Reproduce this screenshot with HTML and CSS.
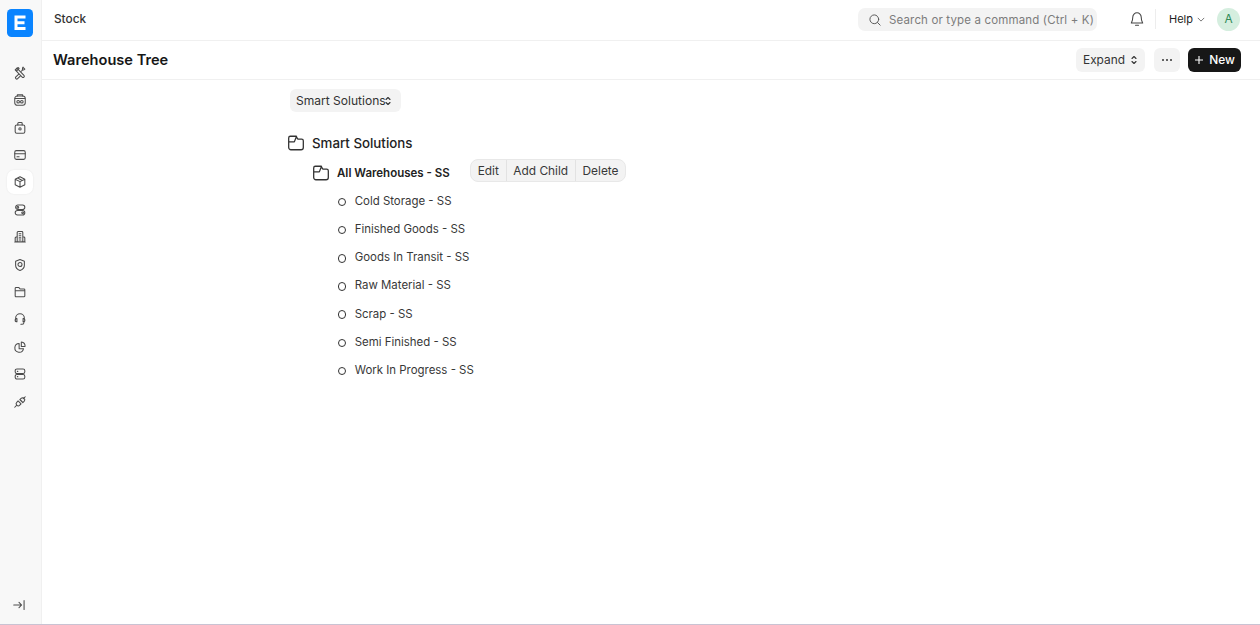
FILE: index.html
```html
<!DOCTYPE html>
<html lang="en">
<head>
<meta charset="utf-8">
<title>Warehouse Tree</title>
<link rel="stylesheet" href="styles.css">
</head>
<body>
<div class="app">
  <aside class="sidebar">
    <div class="logo"><svg width="26" height="28" viewBox="0 0 26 28"><rect width="26" height="28" rx="4.500" fill="#0a84ff"/><path d="M7.500 6.500h11v3h-8v2.700h7v3h-7v2.800h8v3h-11z" fill="#fff"/></svg></div>
    <nav class="nav">
      <a class="nav-item"><svg class="ni" viewBox="0 0 16 16"><path d="M2.500 4.500l2-2 8 8.200a1.400 1.400 0 0 1-2 2z"/><path d="M4.500 2.500L6 1.800l1 1-2.500 2.500-1-1"/><path d="M9.500 6l1.700-1.700a2.800 2.800 0 0 1 .3-3l-.3.100 2.300 2.300a2.800 2.800 0 0 1-3 .7M6.300 9.500l-3 3a1.400 1.400 0 0 0 2 2l3-3"/></svg></a>
      <a class="nav-item"><svg class="ni" viewBox="0 0 16 16"><rect x="2" y="3.500" width="12" height="10.500" rx="2.800"/><path d="M2.500 6.200h11M5 3.500V2h6v1.500"/><circle cx="5.900" cy="10" r="1.500"/><circle cx="10.100" cy="10" r="1.500"/></svg></a>
      <a class="nav-item"><svg class="ni" viewBox="0 0 16 16"><rect x="2.500" y="4.500" width="11" height="9.500" rx="1.800"/><path d="M5.500 4.500V2.800a1 1 0 0 1 1-1h3a1 1 0 0 1 1 1v1.700"/><circle cx="8" cy="9" r="1.300"/></svg></a>
      <a class="nav-item"><svg class="ni" viewBox="0 0 16 16"><rect x="2" y="3" width="12" height="10" rx="1.800"/><path d="M2 6.500h12M4.500 10h2.500"/></svg></a>
      <a class="nav-item active"><svg class="ni" viewBox="0 0 16 16"><path d="M8 2l5.500 2.800v6.400L8 14l-5.500-2.800V4.800zM2.500 4.800L8 7.600l5.500-2.800M8 7.600V14M5.200 3.400l5.500 2.800"/></svg></a>
      <a class="nav-item"><svg class="ni" viewBox="0 0 16 16"><rect x="3" y="2.200" width="10.500" height="5.300" rx="2.600"/><rect x="2.500" y="8.500" width="11" height="5.300" rx="2.600"/><circle cx="5.500" cy="5" r="1"/><circle cx="11" cy="11.200" r="1"/></svg></a>
      <a class="nav-item"><svg class="ni" viewBox="0 0 16 16"><path d="M4.800 13.500V2.800a1 1 0 0 1 1-1h4.400a1 1 0 0 1 1 1v10.700M4.800 8H3.500a1 1 0 0 0-1 1v4.500h11V9a1 1 0 0 0-1-1h-1.300M2 13.800h12M7 4.200h2M7 6.600h2M7 9h2M7 11.400h2"/></svg></a>
      <a class="nav-item"><svg class="ni" viewBox="0 0 16 16"><path d="M8 1.800l5 2v4.400c0 3-2.200 5-5 6-2.800-1-5-3-5-6V3.800z"/><circle cx="8" cy="7.500" r="2.300"/></svg></a>
      <a class="nav-item"><svg class="ni" viewBox="0 0 16 16"><path d="M2.500 5V3.800a1 1 0 0 1 1-1h3l1.500 1.700h4.500a1 1 0 0 1 1 1V12.500a1 1 0 0 1-1 1h-9a1 1 0 0 1-1-1zM2.500 6.500h11"/></svg></a>
      <a class="nav-item"><svg class="ni" viewBox="0 0 16 16"><path d="M3 9V7a5 5 0 0 1 10 0v2M3 7.500h1.500v3.500H3.500a1 1 0 0 1-1-1V8.500M13 7.500h-1.500v3.500h1a1 1 0 0 0 1-1V8.500M12.500 11v1a2 2 0 0 1-2 2H9"/></svg></a>
      <a class="nav-item"><svg class="ni" viewBox="0 0 16 16"><path d="M7 4a5 5 0 1 0 5 6H7z"/><path d="M9.500 2.200a5 5 0 0 1 4.300 5.300H9.500z"/></svg></a>
      <a class="nav-item"><svg class="ni" viewBox="0 0 16 16"><rect x="2.500" y="2.200" width="11" height="5.300" rx="2"/><rect x="2.500" y="8.500" width="11" height="5.300" rx="2"/><path d="M5 5h.5M5 11h.5"/></svg></a>
      <a class="nav-item"><svg class="ni" viewBox="0 0 16 16"><path d="M5.800 6.800l3.400 3.400-1.500 1.500a2.400 2.400 0 0 1-3.400-3.400zM7.800 5.300l1.500-1.500a2.400 2.400 0 0 1 3.400 3.400l-1.500 1.500zM4.300 11.700L2 14M11.700 4.300L14 2M9 6l1.500 1.500"/></svg></a>
    </nav>
    <a class="collapse"><svg class="ni" viewBox="0 0 16 16"><path d="M2 8h9M8 5l3 3-3 3M13.800 3v10"/></svg></a>
  </aside>
  <div class="main">
    <header class="topbar">
      <div class="crumb">Stock</div>
      <div class="top-right">
        <div class="search">
          <svg class="search-icon" viewBox="0 0 16 16"><circle cx="7.200" cy="7.200" r="5"/><path d="M10.900 10.900l3 3"/></svg>
          <span>Search or type a command (Ctrl + K)</span>
        </div>
        <svg class="bell" viewBox="0 0 16 16"><path d="M8 1.800a4.200 4.200 0 0 0-4.200 4.200c0 3.500-1 5-1.500 6h11.400c-.5-1-1.500-2.500-1.500-6A4.200 4.200 0 0 0 8 1.800zM6.500 14.300h3"/></svg>
        <div class="vline"></div>
        <div class="help">Help <svg class="caret" viewBox="0 0 10 6"><path d="M1 1l4 4 4-4"/></svg></div>
        <div class="avatar">A</div>
      </div>
    </header>
    <div class="pagehead">
      <h1>Warehouse Tree</h1>
      <div class="actions">
        <button class="btn expand">Expand <svg class="updown" viewBox="0 0 8 12"><path d="M2 4.500L4 2.500l2 2M2 7.500l2 2 2-2"/></svg></button>
        <button class="btn more"><svg width="12" height="4" viewBox="0 0 12 4"><circle cx="2" cy="2" r="1" fill="#333"/><circle cx="6" cy="2" r="1" fill="#333"/><circle cx="10" cy="2" r="1" fill="#333"/></svg></button>
        <button class="btn new"><svg width="10" height="10" viewBox="0 0 10 10"><path d="M5 1v8M1 5h8" stroke="#fff" stroke-width="1.100"/></svg> New</button>
      </div>
    </div>
    <div class="content">
      <div class="company">Smart Solutions<svg class="updown tight" viewBox="0 0 8 12"><path d="M2 4.500L4 2.500l2 2M2 7.500l2 2 2-2"/></svg></div>
      <div class="tree">
        <div class="node root">
          <svg class="folder" viewBox="0 0 16 16"><path d="M1.500 3.500A1.500 1.500 0 0 1 3 2h5l1.700 2.500h3.300A1.500 1.500 0 0 1 14.500 6v6a2 2 0 0 1-2 2h-9a2 2 0 0 1-2-2zM1.500 7h5l2-5"/></svg>
          <span>Smart Solutions</span>
        </div>
        <div class="node parent">
          <svg class="folder" viewBox="0 0 16 16"><path d="M1.500 3.500A1.500 1.500 0 0 1 3 2h5l1.700 2.500h3.300A1.500 1.500 0 0 1 14.500 6v6a2 2 0 0 1-2 2h-9a2 2 0 0 1-2-2zM1.500 7h5l2-5"/></svg>
          <span class="parent-label">All Warehouses - SS</span>
          <div class="group"><button>Edit</button><button>Add Child</button><button>Delete</button></div>
        </div>
        <ul class="leaves">
          <li>Cold Storage - SS</li>
          <li>Finished Goods - SS</li>
          <li>Goods In Transit - SS</li>
          <li>Raw Material - SS</li>
          <li>Scrap - SS</li>
          <li>Semi Finished - SS</li>
          <li>Work In Progress - SS</li>
        </ul>
      </div>
    </div>
  </div>
</div>
</body>
</html>
```
FILE: styles.css
```css
* { box-sizing: border-box; }
html, body { margin: 0; height: 100%; overflow: hidden; }
body { font-family: Inter, "Liberation Sans", sans-serif; color: #171717; background: #fff; }
.app { display: flex; height: 625px; border-bottom: 1px solid #c9c3d3; }
.sidebar { width: 42px; flex: none; background: #f8f8f8; border-right: 1px solid #f0f0f0; display: flex; flex-direction: column; align-items: center; padding-top: 9px; padding-bottom: 12px; }
.logo { height: 28px; margin-right: 1px; }
.logo svg { display: block; }
.nav { display: flex; flex-direction: column; margin-top: 23.800px; gap: 3.420px; margin-right: 1px; }
.nav-item { width: 26px; height: 24px; display: flex; align-items: center; justify-content: center; border-radius: 7px; }
.nav-item.active { background: #fff; box-shadow: 0 0 2px rgba(0,0,0,.08); }
.ni { width: 14px; height: 14px; fill: none; stroke: #4c4c4c; stroke-width: 1.200; stroke-linecap: round; stroke-linejoin: round; }
.collapse { margin-top: auto; margin-right: 3px; display: flex; width: 14px; height: 14px; }
.main { flex: 1; min-width: 0; display: flex; flex-direction: column; }
.topbar { height: 41px; border-bottom: 1px solid #f0f0f0; display: flex; align-items: center; justify-content: space-between; padding: 0 20px 2px 12px; }
.crumb { font-size: 11.800px; color: #333; font-weight: 500; }
.top-right { display: flex; align-items: center; }
.search { width: 239px; height: 23px; background: #f3f3f3; border-radius: 7px; display: flex; align-items: center; padding-left: 10px; padding-top: 1px; font-size: 11.500px; color: #7c7c7c; letter-spacing: .15px; white-space: nowrap; }
.search-icon { width: 14px; height: 14px; margin-right: 7px; fill: none; stroke: #555; stroke-width: 1.100; stroke-linecap: round; }
.bell { width: 16px; height: 16px; margin-left: 32px; fill: none; stroke: #444; stroke-width: 1.050; stroke-linecap: round; stroke-linejoin: round; }
.vline { width: 1px; height: 20px; background: #ededed; margin-left: 10px; margin-right: 13px; }
.help { font-size: 11px; color: #222; display: flex; align-items: center; gap: 4px; width: 35px; white-space: nowrap; }
.caret { width: 8px; height: 5px; fill: none; stroke: #555; stroke-width: 1; flex: none; }
.avatar { width: 23px; height: 23px; border-radius: 50%; background: #d5eedf; color: #2f8a57; font-size: 11.800px; display: flex; align-items: center; justify-content: center; margin-left: 13px; }
.pagehead { height: 39px; border-bottom: 1px solid #f0f0f0; display: flex; align-items: center; justify-content: space-between; padding: 0 19px 1px 11px; }
h1 { margin: 0; font-size: 14.600px; font-weight: 600; color: #171717; }
.actions { display: flex; align-items: center; }
.btn { font-family: inherit; border: 0; height: 24px; border-radius: 6px; background: #f3f3f3; font-size: 11.900px; color: #333; display: flex; align-items: center; padding: 0; justify-content: center; }
.expand { width: 69px; gap: 5px; }
.more { width: 26px; margin-left: 9px; }
.new { width: 53px; margin-left: 8px; background: #171717; color: #fff; font-weight: 500; gap: 5px; }
.updown { width: 8px; height: 12px; fill: none; stroke: #333; stroke-width: 1.100; stroke-linecap: round; stroke-linejoin: round; }
.tight { margin-left: -1.500px; }
.content { padding: 9px 0 0 248px; }
.company { width: 111px; height: 23px; background: #f3f3f3; border-radius: 6px; display: flex; align-items: center; padding-left: 6px; font-size: 12.050px; color: #333; }
.tree { margin-top: 19px; }
.node { display: flex; align-items: center; }
.root { height: 24px; margin-left: -3.500px; font-size: 13.300px; font-weight: 500; color: #222; }
.folder { width: 18px; height: 18px; fill: none; stroke: #333; stroke-width: 1.150; stroke-linejoin: round; stroke-linecap: round; flex: none; }
.root .folder { margin-right: 7.500px; }
.parent { margin-top: 6px; margin-left: 21.500px; height: 24px; font-size: 11.500px; font-weight: 600; color: #222; }
.parent .folder { margin-right: 7.500px; }
.parent-label { width: 133px; }
.group { display: flex; height: 23px; border: 1px solid #e8e8e8; border-radius: 8px; background: #f3f3f3; overflow: hidden; margin-top: -5px; }
.group button { font-family: inherit; border: 0; background: transparent; font-size: 11.900px; font-weight: 400; color: #383838; padding: 0 6.700px; border-left: 1px solid #e2e2e2; }
.group button:first-child { border-left: 0; }
.leaves { list-style: none; margin: 2px 0 0 47px; padding: 0; }
.leaves li { height: 28.150px; display: flex; align-items: center; font-size: 11.450px; color: #383838; padding-left: 17.700px; position: relative; }
.leaves li::before { content: ""; position: absolute; left: .500px; top: 10.800px; width: 6.500px; height: 6.500px; border: 1.600px solid #333; border-radius: 50%; }
```
